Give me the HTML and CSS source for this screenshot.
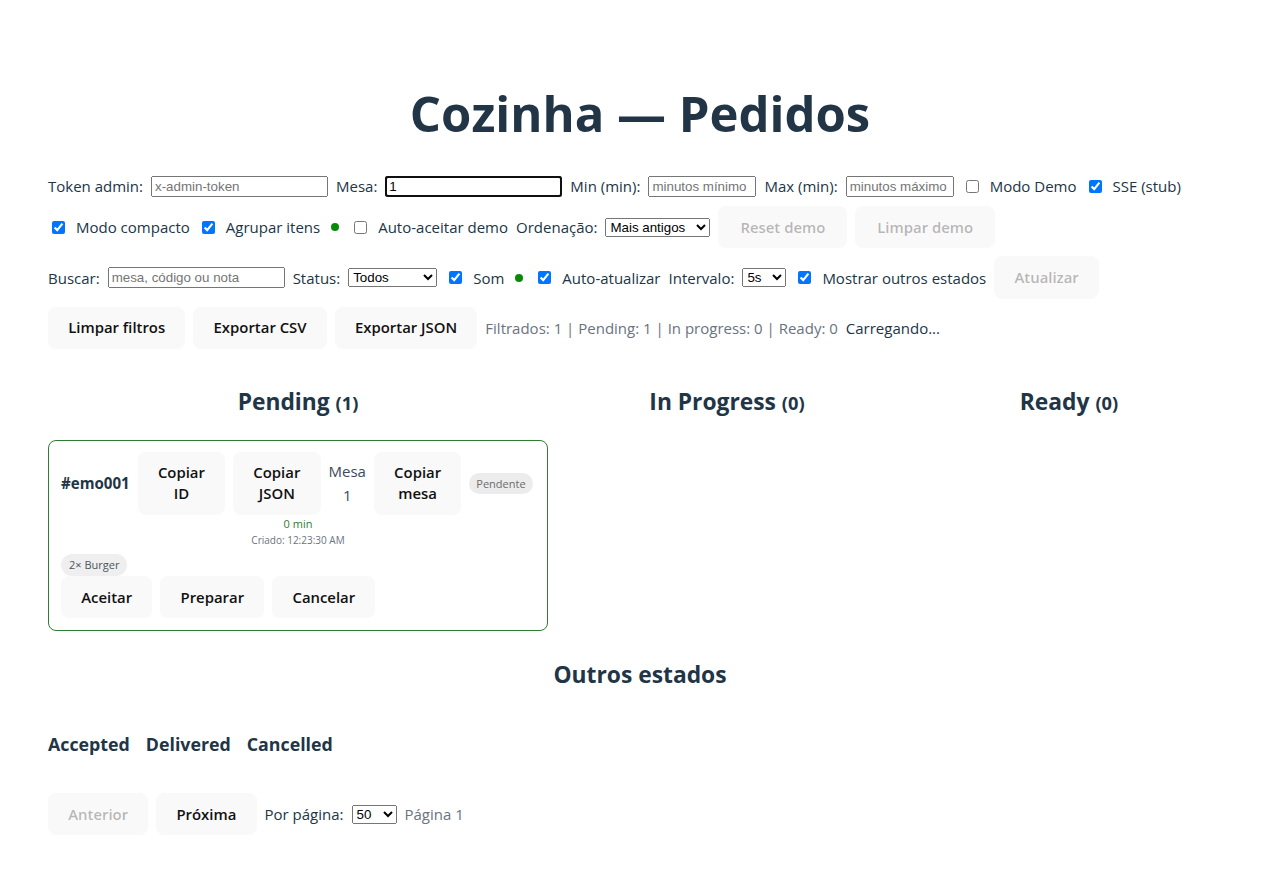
FILE: index.html
```html
<!DOCTYPE html>
<html lang="pt-BR">
<head>
<meta charset="utf-8">
<title>Cozinha — Pedidos</title>
<link rel="stylesheet" href="styles.css">
</head>
<body>
<div class="app">
  <h1 class="title">Cozinha — Pedidos</h1>

  <div class="controls">
    <div class="row">
      <span>Token admin:</span>
      <input class="in-long" type="text" placeholder="x-admin-token">
      <span>Mesa:</span>
      <input class="in-long focused" type="text" value="1">
      <span>Min (min):</span>
      <input class="in-short" type="text" placeholder="minutos mínimo">
      <span>Max (min):</span>
      <input class="in-short" type="text" placeholder="minutos máximo">
      <input type="checkbox">
      <span>Modo Demo</span>
      <input type="checkbox" checked>
      <span>SSE (stub)</span>
    </div>

    <div class="row">
      <input type="checkbox" checked>
      <span>Modo compacto</span>
      <input type="checkbox" checked>
      <span>Agrupar itens</span>
      <span class="dot"></span>
      <input type="checkbox">
      <span>Auto-aceitar demo</span>
      <span>Ordenação:</span>
      <select class="sel-order"><option>Mais antigos</option><option>Mais recentes</option></select>
      <button class="btn btn-demo" disabled>Reset demo</button>
      <button class="btn btn-demo" disabled>Limpar demo</button>
    </div>

    <div class="row">
      <span>Buscar:</span>
      <input class="in-long" type="text" placeholder="mesa, código ou nota">
      <span>Status:</span>
      <select class="sel-status"><option>Todos</option><option>Pending</option></select>
      <input type="checkbox" checked>
      <span>Som</span>
      <span class="dot"></span>
      <input type="checkbox" checked>
      <span>Auto-atualizar</span>
      <span>Intervalo:</span>
      <select class="sel-small"><option>5s</option><option>10s</option></select>
      <input type="checkbox" checked>
      <span>Mostrar outros estados</span>
      <button class="btn" disabled>Atualizar</button>
    </div>

    <div class="row">
      <button class="btn">Limpar filtros</button>
      <button class="btn">Exportar CSV</button>
      <button class="btn">Exportar JSON</button>
      <span class="muted">Filtrados: 1 | Pending: 1 | In progress: 0 | Ready: 0</span>
      <span>Carregando...</span>
    </div>
  </div>

  <div class="board">
    <section class="col">
      <h2 class="col-title">Pending <small>(1)</small></h2>
      <div class="card">
        <div class="card-head">
          <strong class="code">#emo001</strong>
          <button class="btn wrap">Copiar ID</button>
          <button class="btn wrap">Copiar JSON</button>
          <div class="mesa">Mesa<br>1</div>
          <button class="btn wrap">Copiar mesa</button>
          <span class="badge">Pendente</span>
        </div>
        <div class="meta">
          <div class="age">0 min</div>
          <div class="created">Criado: 12:23:30 AM</div>
        </div>
        <div class="items"><span class="chip">2× Burger</span></div>
        <div class="actions">
          <button class="btn">Aceitar</button>
          <button class="btn">Preparar</button>
          <button class="btn">Cancelar</button>
        </div>
      </div>
    </section>
    <section class="col">
      <h2 class="col-title">In Progress <small>(0)</small></h2>
    </section>
    <section class="col">
      <h2 class="col-title">Ready <small>(0)</small></h2>
    </section>
  </div>

  <h2 class="others-title">Outros estados</h2>
  <div class="others">
    <h3>Accepted</h3>
    <h3>Delivered</h3>
    <h3>Cancelled</h3>
  </div>

  <div class="pager">
    <button class="btn" disabled>Anterior</button>
    <button class="btn">Próxima</button>
    <span>Por página:</span>
    <select class="sel-page"><option>50</option><option>100</option></select>
    <span class="muted">Página 1</span>
  </div>
</div>
</body>
</html>
```

FILE: styles.css
```css
html, body {
  margin: 0;
  background: #ffffff;
}

body {
  font-family: "Open Sans", "Noto Sans", sans-serif;
  font-size: 15px;
  line-height: 24px;
  color: #213547;
}

.app {
  padding: 85px 48px 40px;
}

.title {
  margin: 0 0 33px;
  font-size: 49px;
  line-height: 56.3px;
  font-weight: 700;
  text-align: center;
}

.controls {
  display: flex;
  flex-direction: column;
  gap: 8px;
}

.row {
  display: flex;
  flex-wrap: wrap;
  align-items: center;
  gap: 8px;
}

input[type="text"] {
  font-family: "Liberation Sans", Arial, sans-serif;
  font-size: 13.33px;
  box-sizing: border-box;
  height: 21px;
  margin: 0;
}

.in-long { width: 177px; }
.in-short { width: 108px; }

.focused {
  outline: 2px solid #101010;
  outline-offset: -2px;
  border-radius: 3px;
}

select {
  font-family: "Liberation Sans", Arial, sans-serif;
  font-size: 13.33px;
  height: 19px;
  margin: 0;
}

.sel-order { width: 105px; }
.sel-status { width: 89px; }
.sel-small { width: 44px; }
.sel-page { width: 45px; }

.dot {
  display: inline-block;
  width: 8px;
  height: 8px;
  margin: 0 3px;
  border-radius: 50%;
  background: #078a07;
}

.btn {
  font-family: inherit;
  font-size: 14.9px;
  font-weight: 600;
  line-height: 21px;
  padding: 9.6px 19.2px;
  border: 1px solid transparent;
  border-radius: 8px;
  background: #f9f9f9;
  color: #111111;
  margin: 0;
}

.btn:disabled {
  color: rgba(16, 16, 16, 0.3);
}

.btn-demo {
  padding: 9.6px 21px;
}

.btn.wrap {
  width: min-content;
}

.muted {
  color: #6b7280;
}

.board {
  display: grid;
  grid-template-columns: 500px 1fr 1fr;
  gap: 16px;
  margin-top: 15px;
}

.col-title {
  margin: 20px 0 19px;
  font-size: 22.8px;
  line-height: 36px;
  font-weight: 700;
  text-align: center;
}

.col-title small {
  font-size: 0.8em;
}

.card {
  border: 1px solid #2e7d32;
  border-radius: 8px;
  padding: 11px 12px 12px;
}

.card-head {
  display: flex;
  align-items: center;
  gap: 8px;
}

.code {
  font-size: 15.1px;
  font-weight: 700;
}

.mesa {
  text-align: center;
  color: #3c4a5c;
}

.badge {
  font-size: 11px;
  line-height: 17px;
  padding: 2px 7px;
  border-radius: 999px;
  background: #ececec;
  color: #6b6b6b;
}

.meta {
  text-align: center;
}

.age {
  font-size: 11px;
  line-height: 17px;
  color: #2e7d32;
}

.created {
  font-size: 10px;
  line-height: 16px;
  color: #6b7280;
}

.items {
  margin-top: 6px;
  display: flex;
}

.chip {
  font-size: 11px;
  line-height: 18px;
  padding: 2px 8px;
  border-radius: 999px;
  background: #efefef;
  color: #4b5563;
}

.actions {
  display: flex;
  gap: 8px;
}

.others-title {
  margin: 26px 0 0;
  font-size: 22.8px;
  line-height: 36px;
  font-weight: 700;
  text-align: center;
}

.others {
  display: flex;
  gap: 16px;
  margin-top: 37px;
}

.others h3 {
  margin: 0;
  font-size: 17.8px;
  line-height: 28px;
  font-weight: 700;
}

.pager {
  display: flex;
  align-items: center;
  gap: 8px;
  margin-top: 35px;
}
```
